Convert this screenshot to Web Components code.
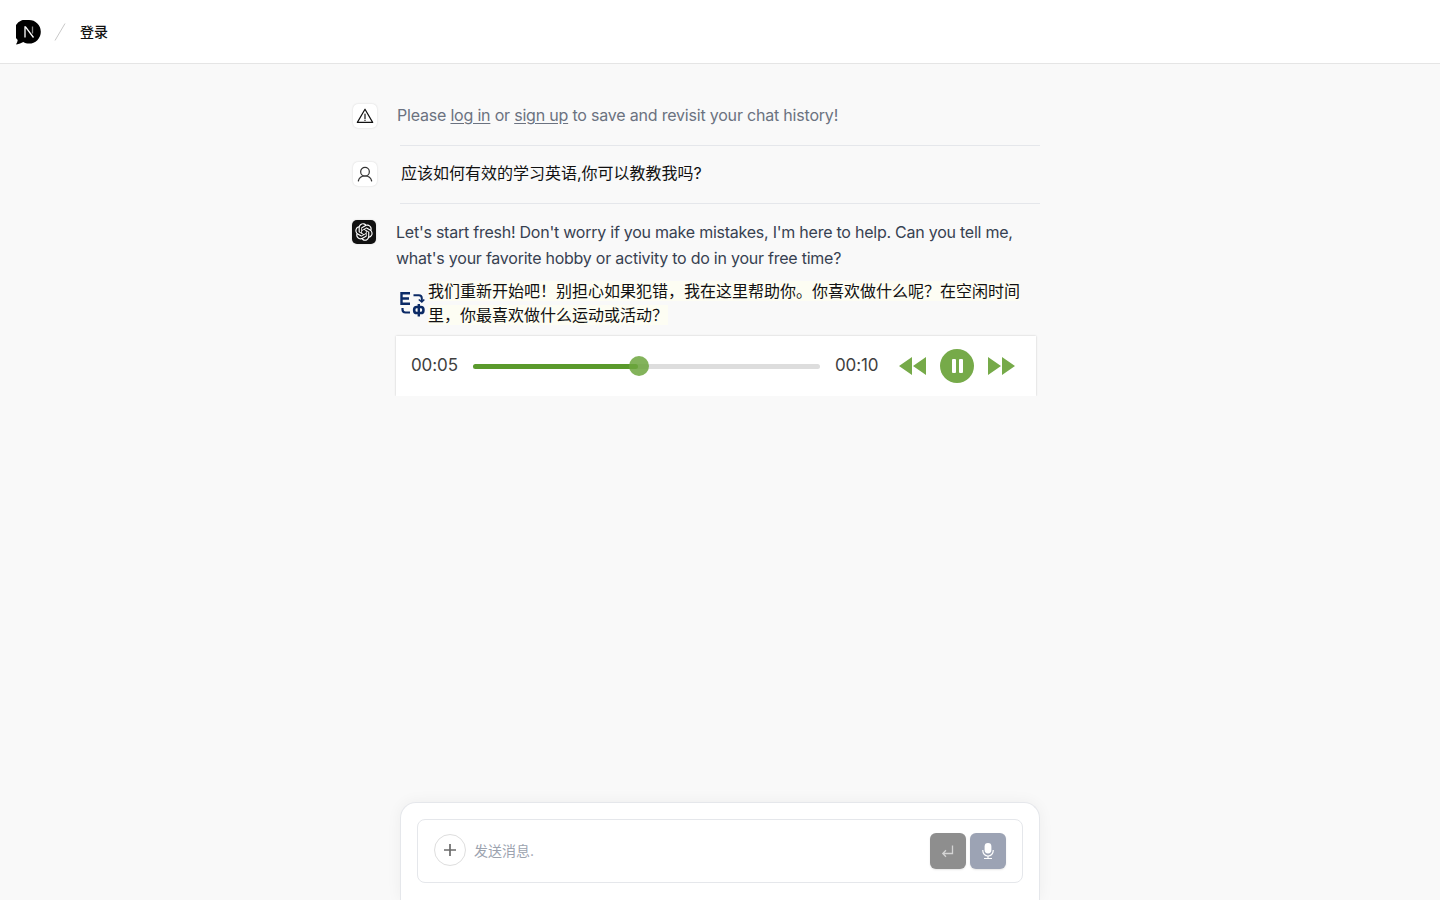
<!DOCTYPE html>
<html lang="zh">
<head>
<meta charset="utf-8">
<title>Chat</title>
<style>
html, body { margin: 0; height: 100%; }
body {
    background-color: #f9f9f9;
    color: #111;
    font-family: Inter, "Noto Sans CJK SC", sans-serif;
}
chat-row a { text-decoration: underline; text-underline-offset: 2px; }
</style>
</head>
<body>
<app-shell>
    <app-header slot="header"></app-header>
    <chat-row avatar="warning" slot="messages" class="notice">
        <span>Please <a>log in</a> or <a>sign up</a> to save and revisit your chat history!</span>
    </chat-row>
    <chat-row avatar="user" slot="messages" class="question">应该如何有效的学习英语,你可以教教我吗?</chat-row>
    <chat-row avatar="bot" slot="messages" class="answer">
        <bot-answer>
            Let's start fresh! Don't worry if you make mistakes, I'm here to help. Can you tell me, what's your favorite hobby or activity to do in your free time?
            <span slot="translation">我们重新开始吧&#xFF01;别担心如果犯错&#xFF0C;我在这里帮助你。你喜欢做什么呢&#xFF1F;在空闲时间里&#xFF0C;你最喜欢做什么运动或活动&#xFF1F;</span>
        </bot-answer>
    </chat-row>
    <chat-composer slot="composer"></chat-composer>
</app-shell>

<script>
(function() {
    const template = document.createElement("template");
    template.innerHTML = `
    <style>
    :host {
        display: flex;
        flex-direction: column;
        height: 100vh;
        overflow: hidden;
    }

    main {
        box-sizing: border-box;
        display: flex;
        flex-direction: column;
        flex-grow: 1;
        padding-top: 40px;
        width: 688px;
        margin-left: 352px;
    }

    .composer {
        display: flex;
        justify-content: center;
    }
    </style>
    <slot name="header"></slot>
    <main><slot name="messages"></slot></main>
    <div class="composer"><slot name="composer"></slot></div>
    `;

    class AppShell extends HTMLElement {
        constructor() {
            super();

            this.attachShadow({ mode: "open" });
            this.shadowRoot.append(template.content.cloneNode(true));
        }
    }

    customElements.define("app-shell", AppShell);
})();

(function() {
    const template = document.createElement("template");
    template.innerHTML = `
    <style>
    :host {
        align-items: center;
        background-color: #fff;
        border-bottom: solid 1px #e5e5e5;
        box-sizing: border-box;
        display: flex;
        flex: none;
        height: 64px;
        padding-left: 16px;
    }

    .logo {
        display: block;
        height: 25px;
        margin-top: 1px;
        width: 25px;
    }

    .slash {
        display: block;
        height: 18px;
        margin-left: 13px;
        margin-top: 1px;
        width: 12px;
    }

    .login {
        color: #111;
        font-family: Inter, "Noto Sans CJK SC", sans-serif;
        font-size: 14px;
        font-weight: 500;
        line-height: 20px;
        margin-left: 14px;
    }
    </style>
    <svg class="logo" viewBox="0 0 25 25">
        <path fill="#000" d="M13 0a11.800 11.800 0 0 1 0 23.600c-2.100 0-4-.5-5.700-1.500-2.100 1.100-4.300 1.800-6.700 2.300-.4 0-.6-.2-.4-.5 .8-1.100 1.300-2.400 1.500-4A11.800 11.800 0 0 1 13 0z"/>
        <path fill="none" stroke="#fff" stroke-width="1.300" d="M9 17.500V6.800h.5L17.500 17.500"/>
        <path fill="none" stroke="#8a8a8a" stroke-width="1.300" d="M16.500 6.500v7"/>
    </svg>
    <svg class="slash" viewBox="0 0 12 18"><path d="M1 17.500L11 .5" stroke="#c8c8c8" stroke-width="1" fill="none"/></svg>
    <span class="login">登录</span>
    `;

    class AppHeader extends HTMLElement {
        constructor() {
            super();

            this.attachShadow({ mode: "open" });
            this.shadowRoot.append(template.content.cloneNode(true));
        }
    }

    customElements.define("app-header", AppHeader);
})();

(function() {
    const icons = {
        warning: `<svg width="18" height="18" viewBox="0 0 24 24" fill="none" stroke="#111" stroke-width="1.600" stroke-linejoin="round" stroke-linecap="round"><path d="M12 3L1.800 20.500h20.400z"/><path d="M12 9.500v6M12 17.800v.2"/></svg>`,
        user: `<svg width="16" height="16" viewBox="0 0 24 24" fill="none" stroke="#333" stroke-width="1.800" stroke-linecap="round"><circle cx="12" cy="8.500" r="6.500"/><path d="M2 22.500c1-4.500 4.800-7.500 10-7.500s9 3 10 7.500"/></svg>`,
        bot: `<svg width="18" height="18" viewBox="0 0 41 41" fill="#fff"><path d="M37.5324 16.8707C37.9808 15.5241 38.1363 14.0974 37.9886 12.6859C37.8409 11.2744 37.3934 9.91076 36.676 8.68622C35.6126 6.83404 33.9882 5.3676 32.0373 4.4985C30.0864 3.62941 27.9098 3.40259 25.8215 3.85078C24.8796 2.7893 23.7219 1.94125 22.4257 1.36341C21.1295 0.785575 19.7249 0.491269 18.3058 0.500197C16.1708 0.495044 14.0893 1.16803 12.3614 2.42214C10.6335 3.67624 9.34853 5.44666 8.6917 7.47815C7.30085 7.76286 5.98686 8.3414 4.8377 9.17505C3.68854 10.0087 2.73073 11.0782 2.02839 12.312C0.956464 14.1591 0.498905 16.2988 0.721698 18.4228C0.944492 20.5467 1.83612 22.5449 3.268 24.1293C2.81966 25.4759 2.66413 26.9026 2.81182 28.3141C2.95951 29.7256 3.40701 31.0892 4.12437 32.3138C5.18791 34.1659 6.8123 35.6322 8.76321 36.5013C10.7141 37.3704 12.8907 37.5973 14.9789 37.1492C15.9208 38.2107 17.0786 39.0587 18.3747 39.6366C19.6709 40.2144 21.0755 40.5087 22.4946 40.4998C24.6307 40.5054 26.7133 39.8321 28.4418 38.5772C30.1704 37.3223 31.4556 35.5506 32.1119 33.5179C33.5027 33.2332 34.8167 32.6547 35.9659 31.821C37.115 30.9874 38.0728 29.9178 38.7752 28.684C39.8458 26.8371 40.3023 24.6979 40.0789 22.5748C39.8556 20.4517 38.9639 18.4544 37.5324 16.8707ZM22.4978 37.8849C20.7443 37.8874 19.0459 37.2733 17.6994 36.1501C17.7601 36.117 17.8666 36.0586 17.936 36.0161L25.9004 31.4156C26.1003 31.3019 26.2663 31.137 26.3813 30.9378C26.4964 30.7386 26.5563 30.5124 26.5549 30.2825V19.0542L29.9213 20.998C29.9389 21.0068 29.9541 21.0198 29.9656 21.0359C29.977 21.052 29.9842 21.0707 29.9867 21.0902V30.3889C29.9842 32.375 29.1946 34.2791 27.7909 35.6841C26.3872 37.0892 24.4838 37.8806 22.4978 37.8849ZM6.39227 31.0064C5.51397 29.4888 5.19742 27.7107 5.49804 25.9832C5.55718 26.0187 5.66048 26.0818 5.73461 26.1244L13.699 30.7248C13.8975 30.8408 14.1233 30.902 14.3532 30.902C14.583 30.902 14.8088 30.8408 15.0073 30.7248L24.731 25.1103V28.9979C24.7321 29.0177 24.7283 29.0376 24.7199 29.0556C24.7115 29.0736 24.6988 29.0893 24.6829 29.1012L16.6317 33.7497C14.9096 34.7416 12.8643 35.0097 10.9447 34.4954C9.02506 33.9811 7.38785 32.7263 6.39227 31.0064ZM4.29707 13.6194C5.17156 12.0998 6.55279 10.9364 8.19885 10.3327C8.19885 10.4013 8.19491 10.5228 8.19491 10.6071V19.808C8.19351 20.0378 8.25334 20.2638 8.36823 20.4629C8.48312 20.6619 8.64893 20.8267 8.84863 20.9404L18.5723 26.5542L15.206 28.4979C15.1894 28.5089 15.1703 28.5155 15.1505 28.5173C15.1307 28.5191 15.1107 28.516 15.0924 28.5082L7.04046 23.8557C5.32135 22.8601 4.06716 21.2235 3.55289 19.3046C3.03862 17.3858 3.30624 15.3413 4.29707 13.6194ZM31.955 20.0556L22.2312 14.4411L25.5976 12.4981C25.6142 12.4872 25.6333 12.4805 25.6531 12.4787C25.6729 12.4769 25.6928 12.4801 25.7111 12.4879L33.7631 17.1364C34.9967 17.849 36.0017 18.8982 36.6606 20.1613C37.3194 21.4244 37.6047 22.849 37.4832 24.2684C37.3617 25.6878 36.8382 27.0432 35.9743 28.1759C35.1103 29.3086 33.9415 30.1717 32.6047 30.6641C32.6047 30.5947 32.6047 30.4733 32.6047 30.3889V21.188C32.6066 20.9586 32.5474 20.7328 32.4332 20.5338C32.319 20.3348 32.154 20.1698 31.955 20.0556ZM35.3055 15.0128C35.2464 14.9765 35.1431 14.9142 35.069 14.8717L27.1045 10.2712C26.906 10.1554 26.6803 10.0943 26.4504 10.0943C26.2206 10.0943 25.9948 10.1554 25.7963 10.2712L16.0726 15.8858V11.9982C16.0715 11.9783 16.0753 11.9585 16.0837 11.9405C16.0921 11.9225 16.1048 11.9068 16.1207 11.8949L24.1719 7.25025C25.4053 6.53903 26.8158 6.19376 28.2383 6.25482C29.6608 6.31589 31.0364 6.78077 32.2044 7.59508C33.3723 8.40939 34.2842 9.53945 34.8334 10.8531C35.3826 12.1667 35.5464 13.6095 35.3055 15.0128ZM14.2424 21.9419L10.8752 19.9981C10.8576 19.9893 10.8423 19.9763 10.8309 19.9602C10.8195 19.9441 10.8122 19.9254 10.8098 19.9058V10.6071C10.8107 9.18295 11.2173 7.78848 11.9819 6.58696C12.7466 5.38544 13.8377 4.42659 15.1275 3.82264C16.4173 3.21869 17.8524 2.99464 19.2649 3.1767C20.6775 3.35876 22.0089 3.93941 23.1034 4.85067C23.0427 4.88379 22.937 4.94215 22.8668 4.98473L14.9024 9.58517C14.7025 9.69878 14.5366 9.86356 14.4215 10.0626C14.3065 10.2616 14.2466 10.4877 14.2479 10.7175L14.2424 21.9419ZM16.071 17.9991L20.4018 15.4978L24.7325 17.9975V22.9985L20.4018 25.4983L16.071 22.9985V17.9991Z"/></svg>`
    };

    const template = document.createElement("template");
    template.innerHTML = `
    <style>
    :host {
        display: flex;
        font-family: Inter, "Noto Sans CJK SC", sans-serif;
        font-size: 16px;
        letter-spacing: -0.2px;
        line-height: 26px;
    }

    .avatar {
        align-items: center;
        background-color: #fff;
        border-radius: 5px;
        box-shadow: 0 0 2px rgba(0, 0, 0, 0.16);
        box-sizing: border-box;
        display: flex;
        flex: none;
        height: 24px;
        justify-content: center;
        margin-left: 1px;
        width: 24px;
    }

    :host([avatar=bot]) .avatar {
        background-color: #111;
        margin-left: 0;
    }

    .content {
        flex-grow: 1;
        min-width: 0;
    }

    :host([avatar=warning]) {
        color: #6b7280;
        height: 41px;
    }

    :host([avatar=warning]) .content {
        margin-top: -2px;
        padding-left: 20px;
    }

    :host([avatar=user]) {
        box-sizing: border-box;
        color: #111;
        height: 59px;
        letter-spacing: 0;
        padding-top: 17px;
    }

    :host([avatar=user]) .content {
        border-bottom: solid 1px #e5e7eb;
        border-top: solid 1px #e5e7eb;
        box-sizing: border-box;
        height: 59px;
        margin-left: 23px;
        margin-top: -17px;
        padding-left: 1px;
        padding-top: 14px;
    }

    :host([avatar=bot]) {
        color: #374151;
        letter-spacing: -0.24px;
        padding-top: 16px;
    }

    :host([avatar=bot]) .content {
        margin-top: -1px;
        padding-left: 20px;
    }

    ::slotted(*) {
        display: block;
    }
    </style>
    <div class="avatar"></div>
    <div class="content"><slot></slot></div>
    `;

    class ChatRow extends HTMLElement {
        constructor() {
            super();

            this.attachShadow({ mode: "open" });
            this.shadowRoot.append(template.content.cloneNode(true));
        }

        connectedCallback() {
            this.shadowRoot.querySelector(".avatar").innerHTML = icons[this.getAttribute("avatar")];
        }
    }

    customElements.define("chat-row", ChatRow);
})();

(function() {
    const template = document.createElement("template");
    template.innerHTML = `
    <style>
    :host {
        display: block;
        width: 644px;
    }

    .text {
        width: 630px;
    }

    .translation {
        color: #111;
        display: flex;
        font-size: 16px;
        letter-spacing: 0;
        line-height: 24px;
        margin-top: 8px;
        width: 628px;
    }

    .translation svg {
        flex: none;
        height: 26px;
        margin: 12px 3px 0 4px;
        width: 25px;
    }

    .mark {
        background-color: #fdfdf3;
        -webkit-box-decoration-break: clone;
        box-decoration-break: clone;
    }

    audio-player {
        margin-top: 9px;
    }
    </style>
    <div class="text"><slot></slot></div>
    <div class="translation">
        <svg viewBox="0 0 25 26" fill="none" stroke="#0b2a66" stroke-width="2.400">
            <path d="M10 2.200H1.500v10.600H10M1.500 7.500H9"/>
            <path d="M13.500 4.200h5.300a3 3 0 0 1 3 3v3" stroke-width="2"/>
            <path d="M18.800 8.500l3 2.500 2.500-2.500" stroke-width="1.600"/>
            <path d="M2.500 17v1.500a3 3 0 0 0 3 3H10" stroke-width="2.200"/>
            <rect x="14.200" y="16" width="9.200" height="6" rx="2.600" stroke-width="2.600"/>
            <path d="M18.800 13v12.500" stroke-width="2.400"/>
        </svg>
        <div><span class="mark"><slot name="translation"></slot></span></div>
    </div>
    <audio-player></audio-player>
    `;

    class BotAnswer extends HTMLElement {
        constructor() {
            super();

            this.attachShadow({ mode: "open" });
            this.shadowRoot.append(template.content.cloneNode(true));
        }
    }

    customElements.define("bot-answer", BotAnswer);
})();

(function() {
    const template = document.createElement("template");
    template.innerHTML = `
    <style>
    :host {
        align-items: center;
        background-color: #fff;
        box-shadow: 0 0 2px rgba(0, 0, 0, 0.2);
        box-sizing: border-box;
        clip-path: inset(-4px -4px 0 -4px);
        color: #3f3f3f;
        display: flex;
        font-family: Inter, sans-serif;
        font-size: 17px;
        height: 60px;
        letter-spacing: -0.1px;
        line-height: 20px;
        padding: 0 0 0 15px;
        width: 640px;
    }

    .time {
        flex: none;
        margin-top: -3px;
        width: 47px;
    }

    .track {
        background-color: #dddddd;
        border-radius: 3px;
        flex: none;
        height: 5px;
        margin: 1px 15px 0 15px;
        position: relative;
        width: 347px;
    }

    .fill {
        background-color: #5a9a2c;
        border-radius: 3px;
        height: 100%;
        width: 47.5%;
    }

    .knob {
        background-color: #6da63e;
        border-radius: 50%;
        height: 20px;
        left: 156px;
        opacity: 0.85;
        position: absolute;
        top: -8px;
        width: 20px;
    }

    .controls {
        align-items: center;
        display: flex;
        margin-left: 17px;
    }

    .skip {
        display: block;
        height: 18px;
        width: 27px;
    }

    .pause {
        align-items: center;
        background-color: #76aa49;
        border-radius: 50%;
        display: flex;
        gap: 3px;
        height: 34px;
        justify-content: center;
        margin: 0 14px;
        width: 34px;
    }

    .pause i {
        background-color: #fff;
        border-radius: 1px;
        display: block;
        height: 14px;
        width: 4px;
    }
    </style>
    <span class="time">00:05</span>
    <div class="track">
        <div class="fill"></div>
        <div class="knob"></div>
    </div>
    <span class="time">00:10</span>
    <div class="controls">
        <svg class="skip" viewBox="0 0 27 18" fill="#76aa49"><path d="M0 9L13 0v18zM14 9L27 0v18z"/></svg>
        <div class="pause"><i></i><i></i></div>
        <svg class="skip" viewBox="0 0 27 18" fill="#76aa49"><path d="M27 9L14 0v18zM13 9L0 0v18z"/></svg>
    </div>
    `;

    class AudioPlayer extends HTMLElement {
        constructor() {
            super();

            this.attachShadow({ mode: "open" });
            this.shadowRoot.append(template.content.cloneNode(true));
        }
    }

    customElements.define("audio-player", AudioPlayer);
})();

(function() {
    const template = document.createElement("template");
    template.innerHTML = `
    <style>
    :host {
        background-color: #fff;
        border: solid 1px #e5e7eb;
        border-bottom: none;
        border-radius: 16px 16px 0 0;
        box-shadow: 0 0 15px rgba(0, 0, 0, 0.05);
        box-sizing: border-box;
        display: block;
        height: 98px;
        padding: 16px;
        width: 640px;
    }

    .box {
        align-items: center;
        border: solid 1px #e5e7eb;
        border-radius: 8px;
        box-sizing: border-box;
        display: flex;
        height: 64px;
        padding: 0 16px;
    }

    .plus {
        align-items: center;
        border: solid 1px #dedede;
        border-radius: 50%;
        box-sizing: border-box;
        display: flex;
        flex: none;
        height: 32px;
        justify-content: center;
        margin-top: -2px;
        width: 32px;
    }

    .placeholder {
        color: #9ca3af;
        flex-grow: 1;
        font-family: Inter, "Noto Sans CJK SC", sans-serif;
        font-size: 14px;
        line-height: 20px;
        margin-left: 8px;
    }

    .button {
        align-items: center;
        border-radius: 6px;
        box-shadow: 0 1px 2px rgba(0, 0, 0, 0.1);
        display: flex;
        flex: none;
        height: 36px;
        justify-content: center;
        width: 36px;
    }

    .send { background-color: #8e8e8e; margin-right: 4px; }
    .mic { background-color: #9ca3b4; }
    </style>
    <div class="box">
        <div class="plus">
            <svg width="14" height="14" viewBox="0 0 14 14" stroke="#6b6b6b" stroke-width="1.700" fill="none"><path d="M7 1v12M1 7h12"/></svg>
        </div>
        <span class="placeholder">发送消息.</span>
        <div class="button send">
            <svg width="14" height="14" viewBox="0 0 14 14" fill="none" stroke="#d4d4d4" stroke-width="1.300"><path d="M11.500 1.500v8H2M5 6.300L1.800 9.500 5 12.700"/></svg>
        </div>
        <div class="button mic">
            <svg width="14" height="18" viewBox="0 0 14 18" fill="#fff"><rect x="3.600" y="1" width="6.800" height="10.500" rx="3.400"/><path d="M1.800 8v.8a5.200 5.200 0 0 0 10.400 0V8" fill="none" stroke="#fff" stroke-width="1.200"/><path d="M6.400 14h1.200v2H11v1H3v-1h3.400z"/></svg>
        </div>
    </div>
    `;

    class ChatComposer extends HTMLElement {
        constructor() {
            super();

            this.attachShadow({ mode: "open" });
            this.shadowRoot.append(template.content.cloneNode(true));
        }
    }

    customElements.define("chat-composer", ChatComposer);
})();
</script>
</body>
</html>
